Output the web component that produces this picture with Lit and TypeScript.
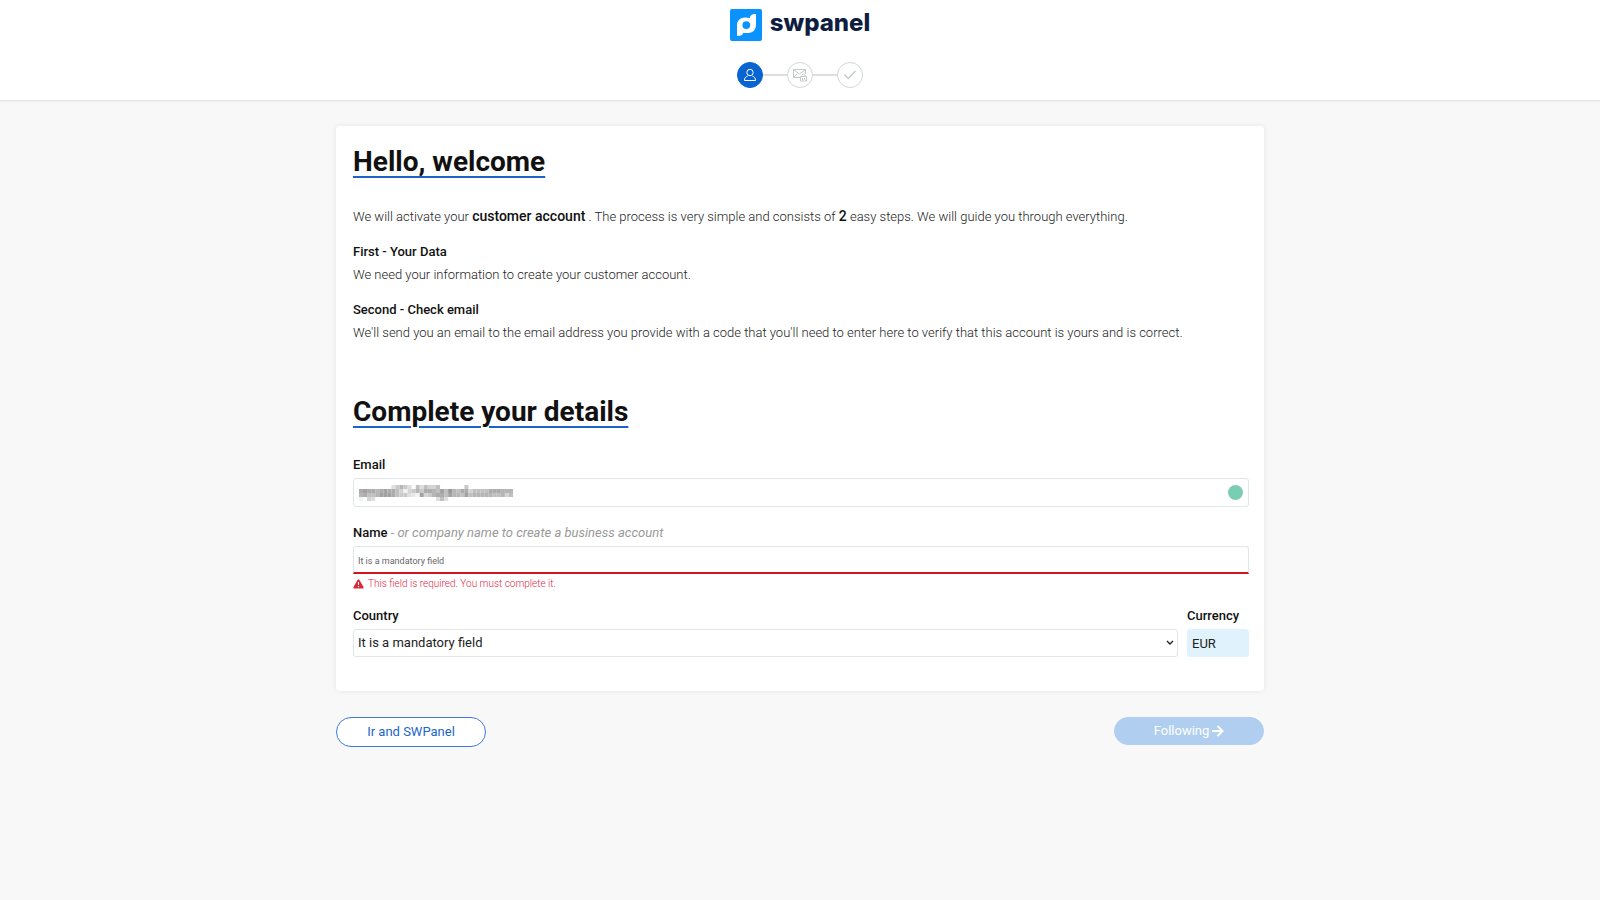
import { LitElement, html, css, svg } from "lit";
import { customElement } from "lit/decorators.js";

const MOSAIC_CELL = 4;
const MOSAIC_ROWS = [
  "........b979b.8b8aa8......9...........",
  "6566765668ada97966785847866a8888666777",
  "768875556899bcd5a9766857785877777887a8",
  "d.ab...............b8b................",
];

@customElement("redacted-value")
class RedactedValue extends LitElement {
  static styles = css`
    :host { display: block; pointer-events: none; }
    svg { display: block; }
  `;
  render() {
    const cells = MOSAIC_ROWS.flatMap((row, y) =>
      [...row].map((c, x) => {
        if (c === ".") return null;
        const v = 112 + parseInt(c, 16) * 10;
        return svg`<rect x=${x * MOSAIC_CELL} y=${y * MOSAIC_CELL} width="4" height="4" fill="rgb(${v},${v},${v})"></rect>`;
      })
    );
    return html`<svg width="154" height="16" viewBox="0 0 152 16" preserveAspectRatio="none" aria-hidden="true">${cells}</svg>`;
  }
}

@customElement("app-root")
class AppRoot extends LitElement {
  static styles = css`
    :host {
      display: block;
      min-height: 100vh;
      background: #f8f8f8;
      color: #111;
      font-family: Roboto, "Liberation Sans", sans-serif;
      font-size: 13px;
      line-height: 20px;
    }
    * { box-sizing: border-box; }
    header {
      height: 101px;
      background: #fff;
      border-bottom: 1px solid #e4e4e4;
      box-shadow: 0 1px 2px rgba(0, 0, 0, 0.04);
      display: flex;
      flex-direction: column;
      align-items: center;
      padding-top: 8px;
      gap: 21px;
    }
    .logo { display: flex; align-items: center; gap: 8px; height: 33px; text-decoration: none; }
    .wordmark { font: 800 24px/30px Inter, sans-serif; color: #0f1d40; padding-bottom: 3px; }
    .steps { display: flex; align-items: center; list-style: none; margin: 0; padding: 0; }
    .step {
      width: 26px; height: 26px; border-radius: 50%;
      border: 1px solid #d4d6d6; background: #fff; color: #c3c9c9;
      display: grid; place-items: center;
    }
    .step.current { background: #0764d0; border-color: #0764d0; color: #fff; }
    .link { width: 24px; height: 2px; background: #dedede; }
    main { width: 58%; margin: 25px auto 0; }
    .card {
      background: #fff; border-radius: 4px; padding: 16px 15px 34px 17px;
      box-shadow: 0 0 6px rgba(0, 0, 0, 0.08);
    }
    h1 {
      margin: 0; font-size: 28px; line-height: 40px; font-weight: 700; color: #111;
      text-decoration: underline; text-decoration-color: #1b62c9;
      text-decoration-thickness: 2px; text-underline-offset: 5px;
    }
    p { margin: 0; font-weight: 300; color: #222; line-height: 23px; }
    strong, h2, label { font-weight: 500; color: #111; }
    strong { font-size: 14px; }
    h2 { margin: 0; font-size: 13px; line-height: 23px; }
    .intro { margin-top: 23px; }
    .stage { margin-top: 12px; }
    .details { margin-top: 48px; }
    form { margin-top: 23px; display: grid; gap: 16px; }
    .field { display: flex; flex-direction: column; }
    label { line-height: 20px; padding-bottom: 3px; }
    label em { font-weight: 400; color: #999; }
    .control { display: grid; align-items: center; }
    .control > * { grid-area: 1 / 1; }
    input, select {
      width: 100%; height: 28px; margin: 0; padding: 0 4px;
      border: 1px solid #e0e5e8; border-radius: 3px; background: #fff;
      font: 400 13px/20px Roboto, sans-serif; color: #222; outline: none;
    }
    .email { height: 29px; }
    .invalid { border-bottom: 2px solid #d4141e; border-radius: 3px 3px 0 0; }
    .invalid::placeholder { font-size: 9px; color: #666; opacity: 1; }
    .redacted { justify-self: start; margin-left: 6px; }
    .status { justify-self: end; margin-right: 6px; width: 15px; height: 15px; border-radius: 50%; background: #7acdb2; }
    .error { display: flex; align-items: center; gap: 4px; font-size: 10px; font-weight: 300; line-height: 20px; color: #e02846; }
    .row { display: grid; grid-template-columns: 1fr 62px; gap: 9px; margin-top: -4px; }
    select { appearance: none; }
    .chevron { justify-self: end; margin-right: 4px; pointer-events: none; }
    .readonly { background: #e0f3fc; border-color: #e0f3fc; }
    .actions { display: flex; justify-content: space-between; align-items: flex-start; padding-top: 26px; }
    button {
      width: 150px; height: 30px; border-radius: 15px; border: 1px solid #3c78e0;
      background: #fff; color: #1b66c9; font: 400 13px/20px Roboto, sans-serif;
      display: flex; align-items: center; justify-content: center; gap: 2px; padding: 0;
    }
    .next { height: 28px; background: #b0cef0; border-color: #b0cef0; color: #fff; }
    svg { display: block; }
  `;

  render() {
    return html`
      <header>
        <a class="logo" href="#" aria-label="swpanel">
          <svg width="32" height="32" viewBox="0 0 32 32">
            <rect width="32" height="32" rx="2" fill="#0a92ff" />
            <path fill="#fff" fill-rule="evenodd" d="M20 9c0-2.500 1.500-4 6-4v11c0 5-3.500 8-8 8h-5c0 1.800-2 3-6 3V16c0-4.500 3.500-7.500 8-7.500zM16.300 12.200a3.900 3.900 0 1 0 0 7.800a3.900 3.900 0 1 0 0-7.800z" />
          </svg>
          <span class="wordmark">swpanel</span>
        </a>
        <ol class="steps">
          <li class="step current">
            <svg width="14" height="14" viewBox="0 0 14 14" fill="none" stroke="currentColor">
              <circle cx="7" cy="4.500" r="3.200" /><path d="M4.500 8.200C2.600 8.800 1.500 10 1.500 12.500h11c0-2.500-1.100-3.700-3-4.300" />
            </svg>
          </li>
          <li class="link" role="presentation"></li>
          <li class="step">
            <svg width="16" height="14" viewBox="0 0 16 14" fill="none" stroke="currentColor">
              <path d="M8 9.500H1.500v-8h12V6M1.500 1.500l6 4.500 6-4.500M1.500 9.500l4-4" />
              <path d="M8.500 8.500h6v4.500h-6zM10 8.500V7.500a1.500 1.500 0 0 1 3 0v1M10.500 10v2M12.500 10v2" />
            </svg>
          </li>
          <li class="link" role="presentation"></li>
          <li class="step">
            <svg width="14" height="12" viewBox="0 0 14 12" fill="none" stroke="currentColor" stroke-width="1.300"><path d="M1.500 5.500l3.800 4L12.500 2" /></svg>
          </li>
        </ol>
      </header>
      <main>
        <section class="card">
          <h1>Hello, welcome</h1>
          <p class="intro">We will activate your <strong>customer account</strong> . The process is very simple and consists of <strong>2</strong> easy steps. We will guide you through everything.</p>
          <div class="stage">
            <h2>First - Your Data</h2>
            <p>We need your information to create your customer account.</p>
          </div>
          <div class="stage">
            <h2>Second - Check email</h2>
            <p>We'll send you an email to the email address you provide with a code that you'll need to enter here to verify that this account is yours and is correct.</p>
          </div>
          <h1 class="details">Complete your details</h1>
          <form>
            <div class="field">
              <label for="email">Email</label>
              <div class="control">
                <input id="email" class="email" type="email" />
                <redacted-value class="redacted"></redacted-value>
                <span class="status"></span>
              </div>
            </div>
            <div class="field">
              <label for="name">Name <em>- or company name to create a business account</em></label>
              <input id="name" class="invalid" placeholder="It is a mandatory field" aria-describedby="name-error" />
              <div class="error" id="name-error">
                <svg width="11" height="10" viewBox="0 0 11 10"><path fill="#d92a35" d="M4.700.700a.900.900 0 0 1 1.600 0l4.200 7.400a.900.900 0 0 1-.800 1.400H1.300a.900.900 0 0 1-.800-1.400z" /><path stroke="#fff" d="M5.500 3v3M5.500 7v1.200" /></svg>
                <span>This field is required. You must complete it.</span>
              </div>
            </div>
            <div class="row">
              <div class="field">
                <label for="country">Country</label>
                <div class="control">
                  <select id="country"><option>It is a mandatory field</option></select>
                  <svg class="chevron" width="8" height="6" viewBox="0 0 8 6" fill="none" stroke="#222" stroke-width="1.400"><path d="M1 1l3 3 3-3" /></svg>
                </div>
              </div>
              <div class="field">
                <label for="currency">Currency</label>
                <input id="currency" class="readonly" value="EUR" readonly />
              </div>
            </div>
          </form>
        </section>
        <div class="actions">
          <button type="button">Ir and SWPanel</button>
          <button type="button" class="next">Following<svg width="13" height="12" viewBox="0 0 13 12" fill="none" stroke="currentColor" stroke-width="2"><path d="M1 6h10M6.500 1l5 5-5 5" /></svg></button>
        </div>
      </main>
    `;
  }
}
